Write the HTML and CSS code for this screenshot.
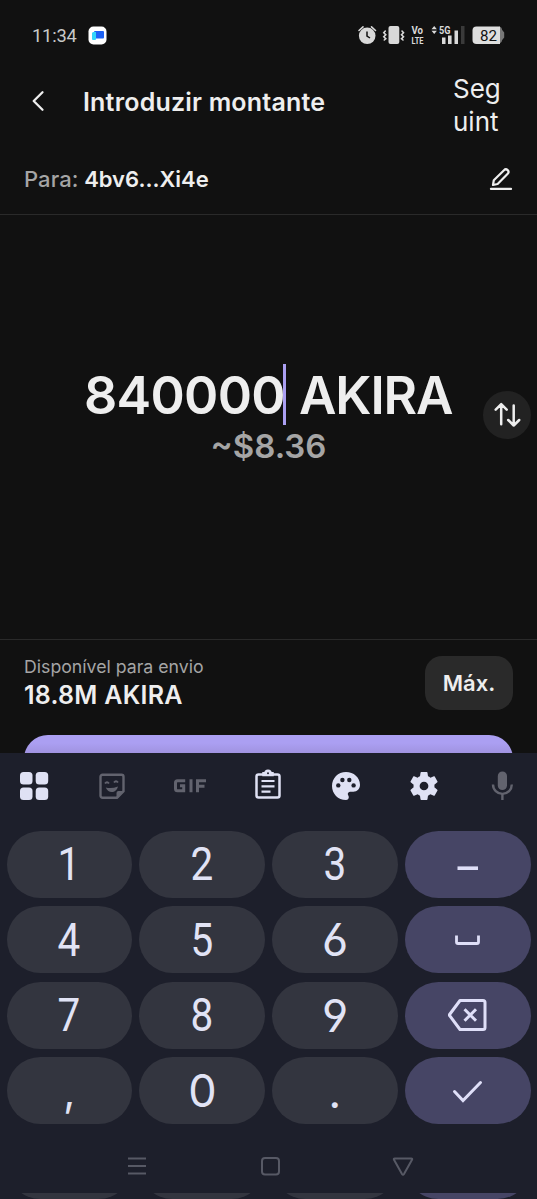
FILE: index.html
```html
<!DOCTYPE html>
<html lang="pt">
<head>
<meta charset="utf-8">
<title>Introduzir montante</title>
<link rel="stylesheet" href="styles.css">
</head>
<body>
<div class="screen">
  <div class="status">
    <span class="clock">11:34</span>
    <svg class="app-badge" width="19" height="19" viewBox="0 0 19 19"><rect x=".5" y=".5" width="18" height="18" rx="5" fill="#fff"/><rect x="6" y="5" width="10" height="7.5" rx="1" fill="#1d62f5"/><path d="M5 6h3v7a1 1 0 0 1-1 1H5a1 1 0 0 1-1-1V7z" fill="#31d5fb"/></svg>
    <svg class="status-icons" width="150" height="24" viewBox="0 0 150 24">
      <g fill="none" stroke="#d9d9d9" stroke-width="1.6" stroke-linecap="round">
        <path d="M3 7.500l4-3.700M15.500 3.800l4 3.700"/>
        <path d="M29.300 8l-1.500 1.700 2 2-2 2 2 2-1.500 1.300M46 8l1.500 1.700-2 2 2 2-2 2 1.500 1.300"/>
      </g>
      <circle cx="11.200" cy="12.800" r="8.300" fill="#d9d9d9"/>
      <path d="M11 8.500v4.500l3 2" fill="none" stroke="#111" stroke-width="1.500"/>
      <rect x="32.500" y="3" width="10.800" height="18" rx="2" fill="#d9d9d9"/>
      <g class="tiny"><text><tspan x="55.500" y="10.800" textLength="11.500" lengthAdjust="spacingAndGlyphs">Vo</tspan><tspan class="lte" x="55.500" y="20.500" textLength="12" lengthAdjust="spacingAndGlyphs">LTE</tspan></text><text x="83" y="10.800" textLength="11.500" lengthAdjust="spacingAndGlyphs">5G</text></g>
      <path d="M75.500 6.200l2.700-3.200 2.700 3.200zM75.500 7.700h5.400l-2.700 3.200z" fill="#d9d9d9"/>
      <path d="M86 14.500h3.500V21H86zM92 12.500h3.600V21H92zM98.500 7.500h3.500V21h-3.500z" fill="#d9d9d9"/>
      <path d="M105 3h3.500v18H105z" fill="#3a3a3a"/>
      <path d="M143.500 3.500a4 4 0 0 1 2.700 3.500l2 2.500v5l-2 2.500a4 4 0 0 1-2.700 3.500z" fill="#777"/>
      <path d="M120.500 3.500H144v17.500h-23.500a4 4 0 0 1-4-4v-9.500a4 4 0 0 1 4-4z" fill="#dedede"/>
      <text class="battery" x="124" y="17.800" textLength="17" lengthAdjust="spacingAndGlyphs">82</text>
    </svg>
  </div>

  <header class="header">
    <svg class="back" width="16" height="24" viewBox="0 0 16 24"><path d="M12.500 3.300L3.700 12l8.800 8.700" fill="none" stroke="#eee" stroke-width="2.300" stroke-linecap="round" stroke-linejoin="round"/></svg>
    <h1 class="title">Introduzir montante</h1>
    <div class="next">Seg<br>uint</div>
  </header>

  <section class="recipient">
    <div class="to"><span class="muted">Para:</span> 4bv6...Xi4e</div>
    <svg class="edit" width="24" height="26" viewBox="0 0 24 26" fill="none" stroke="#eee" stroke-linecap="round" stroke-linejoin="round"><path d="M4 18l.8-4.700L15 3.200a2.500 2.500 0 0 1 3.700 3.600L8.600 17z" stroke-width="2.200"/><path d="M2 21.900h20" stroke-width="2.300"/></svg>
  </section>

  <main class="amount">
    <div class="value"><span class="digits">840000</span><span class="caret"></span><span class="token">AKIRA</span></div>
    <div class="fiat">~$8.36</div>
    <div class="swap"><svg width="28" height="28" viewBox="0 0 28 28" fill="none" stroke="#eee" stroke-width="2.500" stroke-linecap="round" stroke-linejoin="round"><path d="M8.200 23.200V3.300M2.700 8.700l5.500-5.500 5.500 5.500M20.700 4.500v20M15.200 19l5.500 5.500 5.500-5.500"/></svg></div>
  </main>

  <section class="available">
    <div class="balance"><div class="label">Disponível para envio</div><div class="total">18.8M AKIRA</div></div>
    <div class="max">Máx.</div>
  </section>
  <div class="submit"><div class="submit-button"></div></div>

  <section class="keyboard">
    <div class="toolbar">
      <svg viewBox="0 0 32 32" fill="#dfe1f4"><rect x="2" y="2" width="12.500" height="12.500" rx="3.500"/><rect x="17.700" y="2" width="12.500" height="12.500" rx="3.500"/><rect x="2" y="17.600" width="12.500" height="12.500" rx="3.500"/><rect x="17.700" y="17.600" width="12.500" height="12.500" rx="3.500"/></svg>
      <svg viewBox="0 0 32 32" fill="none" stroke="#62636e" stroke-width="2.400"><path d="M6.500 4.700h19a2 2 0 0 1 2 2v14.500l-6.500 6.500H6.500a2 2 0 0 1-2-2v-19a2 2 0 0 1 2-2z"/><path d="M20.500 28v-5a2 2 0 0 1 2-2h5.500l-6 7z" fill="#62636e" stroke="none"/><path d="M9 13.500q2-2.500 4 0M18 12.500q2-2.500 4 0" stroke-width="1.900"/><path d="M9.700 17.500q6 1.500 12.200-1c-1 6-9 8.300-12.200 1z" fill="#62636e" stroke="none"/></svg>
      <svg viewBox="0 0 32 32" fill="none" stroke="#62636e" stroke-width="3"><path d="M11.200 10.800H3.500a2 2 0 0 0-2 2v6a2 2 0 0 0 2 2h6.200v-5H6M17 9.300v13M23.500 22.300V10.800h8.500M23.500 16.300h7"/></svg>
      <svg viewBox="0 0 32 32" fill="none" stroke="#dfe1f4" stroke-width="2.500"><rect x="4.500" y="4.500" width="23" height="23" rx="2"/><path d="M9.500 11h13M9.500 16.300h13M9.500 21.600h9" stroke-width="2.200"/><path d="M11.500 5V3.300h2a2.500 2.500 0 0 1 5 0h2V5z" fill="#dfe1f4"/><circle cx="16" cy="3.300" r="1" fill="#1d1f2b" stroke="none"/></svg>
      <svg viewBox="0 0 32 32"><path d="M16 2C8 2 2 8.200 2 16s6 14 14 14c1.700 0 2.800-1.200 2.800-2.800 0-1.600-1-1.900-1-3.200 0-1.300 1-2.300 2.300-2.300h3.200c4 0 6.700-3 6.700-7C30 7.500 23.700 2 16 2z" fill="#dfe1f4"/><g fill="#1d1f2b"><circle cx="8.300" cy="15.400" r="2.200"/><circle cx="12.400" cy="10" r="2.200"/><circle cx="19.300" cy="10" r="2.200"/><circle cx="23.600" cy="15.400" r="2.200"/></g></svg>
      <svg viewBox="1 1 22 22"><path fill="#dfe1f4" d="M19.140 12.940c.04-.3.060-.61.060-.94s-.02-.64-.07-.94l2.030-1.580c.18-.14.230-.41.120-.61l-1.920-3.320c-.12-.22-.37-.29-.59-.22l-2.390.96a7 7 0 0 0-1.620-.94l-.36-2.540A.48.480 0 0 0 13.920 2.400h-3.840c-.24 0-.43.170-.47.410l-.36 2.540c-.59.240-1.130.57-1.620.94l-2.390-.96c-.22-.08-.47 0-.59.220L2.740 8.870c-.12.210-.08.470.120.610l2.030 1.580c-.05.300-.09.630-.09.940s.02.640.070.940l-2.030 1.580c-.18.140-.23.410-.12.610l1.920 3.320c.12.220.37.290.59.220l2.390-.96c.5.380 1.030.700 1.620.940l.36 2.540c.05.240.24.410.48.410h3.840c.24 0 .44-.17.470-.41l.36-2.540a7 7 0 0 0 1.620-.94l2.390.960c.22.080.47 0 .59-.22l1.920-3.320c.12-.22.070-.47-.12-.61zM12 15a3 3 0 1 1 0-6 3 3 0 0 1 0 6z"/></svg>
      <svg viewBox="0 0 32 32" fill="none" stroke="#62636e" stroke-width="2.400"><rect x="11.800" y="1.500" width="9.200" height="18.500" rx="4.600" fill="#62636e" stroke="none"/><path d="M7 14.500a9.400 9.400 0 0 0 18.800 0M16.400 24v6" stroke-linecap="butt"/></svg>
    </div>
    <div class="keys">
      <div class="key"><span class="digit">1</span></div><div class="key"><span class="digit">2</span></div><div class="key"><span class="digit">3</span></div>
      <div class="key fn"><svg width="40" height="40" viewBox="0 0 40 40"><path d="M9.500 24.200h20.500" stroke-width="3.600"/></svg></div>
      <div class="key"><span class="digit">4</span></div><div class="key"><span class="digit">5</span></div><div class="key open">6</div>
      <div class="key fn"><svg width="40" height="40" viewBox="0 0 40 40"><path d="M8.500 15.500v6.500a1.500 1.500 0 0 0 1.500 1.500h19a1.500 1.500 0 0 0 1.500-1.500v-6.500" stroke-width="2.800"/></svg></div>
      <div class="key"><span class="digit">7</span></div><div class="key"><span class="digit">8</span></div><div class="key open">9</div>
      <div class="key fn"><svg width="40" height="40" viewBox="0 0 40 40"><path d="M12 5.500h23a2 2 0 0 1 2 2v25a2 2 0 0 1-2 2H12L1.200 20z" stroke-width="3" stroke-linejoin="round"/><path d="M16.500 14.200l11.500 11.600M28 14.200L16.500 25.800" stroke-width="3"/></svg></div>
      <div class="key comma">,</div><div class="key zero">0</div><div class="key dot">.</div>
      <div class="key fn"><svg width="40" height="40" viewBox="0 0 40 40"><path d="M6.500 20.500l8.500 9 17.500-18" stroke-width="3" stroke-linecap="round"/></svg></div>
    </div>
    <nav class="nav">
      <svg viewBox="0 0 24 24"><path d="M3 4.500h18M3 12h18M3 19.500h18"/></svg>
      <svg viewBox="0 0 24 24"><rect x="4" y="4" width="17" height="16.500" rx="3"/></svg>
      <svg viewBox="0 0 24 24"><path d="M3.800 4.500h16.400q1.500 0 .8 1.300L13 20q-1 1.500-2 0L3 5.800q-.7-1.300.8-1.300z"/></svg>
    </nav>
    <div class="peek"><i class="key"></i><i class="key"></i><i class="key"></i><i class="key fn"></i></div>
  </section>
</div>
</body>
</html>
```
FILE: styles.css
```css
* { box-sizing: border-box; }
body { margin: 0; background: #111; }
.screen { width: 537px; height: 1199px; overflow: hidden; background: #111; color: #eee; font-family: Inter, sans-serif; display: flex; flex-direction: column; white-space: nowrap; }
.status { height: 70px; display: flex; align-items: center; padding-left: 32px; flex: none; }
.clock { width: 56px; font: 400 18.300px Roboto, sans-serif; letter-spacing: -.2px; color: #c9c9c9; }
.status-icons { margin: 0 0 0 249px; }
.tiny { font: 700 10.300px Roboto, sans-serif; fill: #d9d9d9; }
.lte { font-size: 9.500px; }
.battery { font: 400 15.500px Roboto, sans-serif; fill: #111; }
.header { height: 70px; flex: none; display: flex; align-items: center; padding-left: 30px; }
.back { margin-bottom: 8px; }
.title { margin: 0 0 6px 37px; width: 370px; font-size: 25px; line-height: 30px; font-weight: 600; letter-spacing: .2px; }
.next { font-size: 26px; line-height: 33px; }
.recipient { height: 75px; flex: none; display: flex; justify-content: space-between; align-items: flex-start; padding: 26px 24px 0; border-bottom: 1px solid #2a2a2a; }
.to { font-size: 22px; line-height: 27px; font-weight: 600; }
.edit { margin-top: 1px; }
.muted { color: #a5a5a5; font-weight: 500; letter-spacing: .1px; }
.amount { position: relative; height: 425px; flex: none; padding-top: 149px; border-bottom: 1px solid #2a2a2a; }
.value { display: flex; align-items: center; height: 61px; padding-left: 84px; font-size: 52px; font-weight: 600; }
.digits { letter-spacing: -.7px; padding-top: 1px; }
.caret { width: 3px; height: 61px; background: #ab9ff2; margin-left: -2px; }
.token { margin-left: 13px; font-size: 51.500px; letter-spacing: -1.100px; padding-top: 1px; }
.fiat { text-align: center; font-size: 33px; line-height: 42px; font-weight: 600; color: #a5a5a5; }
.swap { position: absolute; right: 6px; top: 176px; width: 48px; height: 48px; border-radius: 50%; background: #222; display: flex; align-items: center; justify-content: center; }
.available { height: 95px; flex: none; display: flex; justify-content: space-between; padding: 16px 24px 0; }
.label { font-size: 17.700px; line-height: 22px; color: #a5a5a5; }
.total { font-size: 25px; line-height: 35px; font-weight: 600; letter-spacing: .25px; }
.max { width: 88px; height: 54px; border-radius: 17px; background: #2a2a2a; display: flex; align-items: center; justify-content: center; font-size: 22px; font-weight: 600; }
.submit { height: 18px; flex: none; padding: 0 24px; overflow: hidden; }
.submit-button { height: 54px; border-radius: 24px; background: linear-gradient(#ab9ff2 8px, #a093e0 18px); }
.keyboard { flex: none; height: 446px; background: #1d1f2b; display: flex; flex-direction: column; }
.toolbar { height: 77.500px; flex: none; display: flex; justify-content: space-between; align-items: center; padding: 0 19px 12px 18px; }
.toolbar svg { width: 32px; height: 32px; overflow: visible; }
.keys { display: grid; grid-template-columns: repeat(4, 1fr); grid-auto-rows: 67px; gap: 8.500px 7px; padding: 0 6.500px; }
.key { height: 67px; border-radius: 33.500px; background: #33353f; color: #e1e3f5; display: flex; align-items: center; justify-content: center; font: 400 46px/67px Roboto, sans-serif; }
.digit { transform: scaleX(.88); padding-top: 1px; }
.open, .zero { font-family: Inter, sans-serif; font-size: 45px; font-weight: 400; }
.open { font-feature-settings: "cv03", "cv04"; }
.open, .zero { letter-spacing: -.5px; }
.comma { font-family: Inter, sans-serif; font-size: 42px; }
.dot { font-family: Lato, sans-serif; font-size: 47px; }
.fn { background: #464565; }
.fn svg { fill: none; stroke: #dfdff8; }
.nav { height: 69px; flex: none; display: flex; justify-content: space-between; padding: 30px 122px 0 125px; }
.nav svg { width: 24px; height: 24px; fill: none; stroke: #575965; stroke-width: 2; }
.peek { height: 6px; flex: none; overflow: hidden; display: grid; grid-template-columns: repeat(4, 1fr); align-items: end; gap: 7px; padding: 0 6.500px; align-content: end; }
```
